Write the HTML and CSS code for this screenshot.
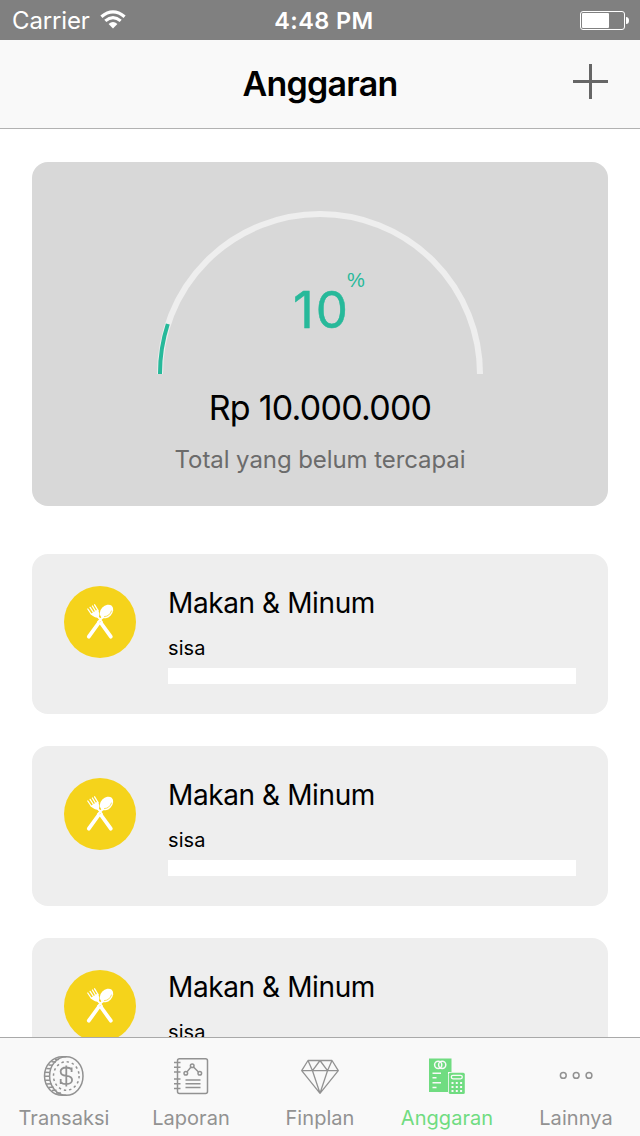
FILE: index.html
```html
<!DOCTYPE html>
<html lang="id">
<head>
<meta charset="utf-8">
<title>Anggaran</title>
<link rel="stylesheet" href="styles.css">
</head>
<body>
<svg width="0" height="0" class="defs">
  <symbol id="cutlery" viewBox="0 0 72 72">
    <circle cx="36" cy="36" r="36" fill="#f5d31b"/>
    <g stroke="#fff" stroke-linecap="round" fill="none">
      <path d="M34.300 37.500 24.800 50.700M37.300 37.500 46.800 50.700" stroke-width="3.800"/>
      <path d="M34 31 38 36M39 31 34 36" stroke-width="2"/>
      <path d="M23.800 23 27.500 28.500M26.100 21.400 29.800 27M28.400 20 32 26M30.600 18.800 34 24.500" stroke-width="1.300"/>
    </g>
    <path d="M26.500 28 34 23.200Q36.200 27.500 34.800 31.600Q30.500 32.200 26.500 28Z" fill="#fff"/>
    <ellipse cx="42.500" cy="25.500" rx="5.700" ry="7.700" transform="rotate(43 42.500 25.500)" fill="#fff"/>
    <path d="M40 30.700Q45.800 30.200 47.600 24.600" stroke="#f5d31b" stroke-width=".7" fill="none"/>
  </symbol>
</svg>
<div class="screen">
  <header class="status">
    <div class="network">
      <span class="carrier">Carrier</span>
      <svg width="26" height="20" viewBox="0 0 26 20"><g fill="none" stroke="#fff" stroke-width="3.200"><path d="M1.400 6.800Q13-3 24.600 6.800"/><path d="M5.300 10.900Q13 4.400 20.700 10.900"/></g><path d="M8.600 14Q13 10.200 17.400 14L13 18.500Z" fill="#fff"/></svg>
    </div>
    <span class="time">4:48 PM</span>
    <svg class="battery" width="50" height="20" viewBox="0 0 50 20"><rect x=".5" y="1.500" width="44" height="18" rx="2.500" fill="none" stroke="#fff"/><rect x="2" y="3" width="27" height="15" rx="1" fill="#fff"/><path d="M46 7Q49 7 49 10.500T46 14Z" fill="#fff"/></svg>
  </header>
  <nav class="navbar">
    <h1 class="title">Anggaran</h1>
    <svg class="add" width="35" height="35" viewBox="0 0 35 35"><path d="M0 17.500H35M17.500 0V35" stroke="#666" stroke-width="3"/></svg>
  </nav>
  <main class="content">
    <section class="summary">
      <div class="gauge">
        <svg class="arc" width="326" height="163" viewBox="0 0 326 163"><path d="M3 163A160 160 0 0 1 323 163" fill="none" stroke="#eee" stroke-width="6"/><path d="M3 163A160 160 0 0 1 10.800 113" fill="none" stroke="#27b99a" stroke-width="4"/></svg>
        <div class="percent"><span class="value">10</span><span class="unit">%</span></div>
      </div>
      <div class="amount">Rp 10.000.000</div>
      <div class="caption">Total yang belum tercapai</div>
    </section>
    <section class="budgets">
      <article class="budget">
        <svg width="72" height="72"><use href="#cutlery"/></svg>
        <div class="details"><h2 class="name">Makan &amp; Minum</h2><p class="left">sisa</p><div class="bar"></div></div>
      </article>
      <article class="budget">
        <svg width="72" height="72"><use href="#cutlery"/></svg>
        <div class="details"><h2 class="name">Makan &amp; Minum</h2><p class="left">sisa</p><div class="bar"></div></div>
      </article>
      <article class="budget">
        <svg width="72" height="72"><use href="#cutlery"/></svg>
        <div class="details"><h2 class="name">Makan &amp; Minum</h2><p class="left">sisa</p><div class="bar"></div></div>
      </article>
    </section>
  </main>
  <footer class="tabs">
    <div class="tab">
      <svg width="42" height="42" viewBox="0 0 42 42" fill="none" stroke="#929292" stroke-width="1.500"><ellipse cx="23.300" cy="21" rx="16.700" ry="19.300"/><path d="M23.300 1.700H19.500A18 19.300 0 0 0 19.500 40.300H23.300"/><ellipse cx="23.300" cy="21" rx="12.800" ry="14.200" stroke-dasharray="2.400 2.900"/><path d="M12 4.200 16 4.500M8.500 6.800 13 7M5.500 10 10 10.200M3.300 13.500 8 13.800M2 17.300 7 17.500M1.500 21.300H6.500M2 25.200H7M3.300 29 8.500 28.800M5.600 32.400 10.500 32M9 35.600 13.500 35.200M13 38H18"/><path d="M28.600 17V14.300Q26.500 12.500 23.300 12.500C15.500 12.500 16 20.500 23.300 20.800C31 21 31 29.200 23.300 29.200Q19.500 29.200 17.700 27M17.700 24V29M28.600 12.500V17M23.300 10.500V31.500" stroke-width="1.800"/></svg>
      <span class="label">Transaksi</span>
    </div>
    <div class="tab laporan">
      <svg width="42" height="42" viewBox="0 0 42 42" fill="none" stroke="#929292" stroke-width="1.500"><rect x="7.500" y="3.700" width="30" height="34.800" rx="2"/><path d="M4 7.500H10.500M4 12.200H10.500M4 17H10.500M4 24H10.500M4 28.800H10.500M4 33.600H10.500M15.500 25H30.500M15.500 28.800H30.500M15.500 32.500H30.500"/><circle cx="15.800" cy="18.300" r="1.800"/><circle cx="22.200" cy="10.700" r="1.800"/><circle cx="29.800" cy="18.300" r="1.800"/><path d="M17 16.900 21 12M23.500 12 28.500 17"/></svg>
      <span class="label">Laporan</span>
    </div>
    <div class="tab">
      <svg width="42" height="42" viewBox="0 0 42 42" fill="none" stroke="#929292" stroke-width="1.300" stroke-linejoin="round"><path d="M9 5.500H33L39.300 15.700 21 38.300 2.700 15.700ZM2.700 15.700H39.300M9 5.500 13.500 15.700 21 5.500 28.500 15.700 33 5.500M13.500 15.700 21 38.300 28.500 15.700"/></svg>
      <span class="label">Finplan</span>
    </div>
    <div class="tab anggaran">
      <svg width="42" height="42" viewBox="0 0 42 42"><path d="M3 3.500H25.500V17H22V37H3Z" fill="#70dc81"/><g fill="none" stroke="#f9f9f9" stroke-width="1.500"><circle cx="12.200" cy="9.800" r="3.600"/><circle cx="16.200" cy="9.800" r="3.600"/><path d="M6.500 18.200H15M6.500 22.800H10.500M6.500 27.700H15M6.500 32.400H10.500"/></g><rect x="22.800" y="17.800" width="16" height="21.200" rx="1.500" fill="#70dc81"/><g fill="none" stroke="#f9f9f9"><rect x="25.300" y="20.300" width="11" height="3.500" rx="1.700" stroke-width="1.300"/><path d="M25.500 28H36.500M25.500 32H36.500M25.500 36H36.500" stroke-width="2" stroke-dasharray="2 2.300"/></g></svg>
      <span class="label">Anggaran</span>
    </div>
    <div class="tab">
      <svg width="42" height="42" viewBox="0 0 42 42" fill="none" stroke="#929292" stroke-width="1.500"><circle cx="8.300" cy="20.400" r="2.900"/><circle cx="21.200" cy="20.400" r="2.900"/><circle cx="34" cy="20.400" r="2.900"/></svg>
      <span class="label">Lainnya</span>
    </div>
  </footer>
</div>
</body>
</html>
```
FILE: styles.css
```css
* { box-sizing: border-box; margin: 0; padding: 0; }
body { background: #fff; font-family: Inter, "Liberation Sans", sans-serif; color: #000; }
svg { display: block; flex: none; }
.defs { display: none; }
.screen { height: 1136px; width: 640px; display: flex; flex-direction: column; overflow: hidden; }
.status { height: 40px; flex: none; background: #808080; color: #fff; display: grid; grid-template-columns: 1fr auto 1fr; align-items: center; padding: 0 10px 0 12px; }
.network { display: flex; align-items: center; gap: 10px; }
.carrier { font-size: 24px; letter-spacing: -.15px; line-height: 38px; padding-top: 2px; }
.time { font-size: 23.5px; font-weight: 600; letter-spacing: .4px; line-height: 38px; padding: 2px 0 0 6px; }
.battery { justify-self: end; }
.navbar { height: 89px; flex: none; background: #f9f9f9; border-bottom: 1px solid #b2b2b2; display: grid; grid-template-columns: 1fr auto 1fr; align-items: start; padding: 0 32px; }
.title { grid-column: 2; font-size: 34px; font-weight: 600; line-height: 88px; letter-spacing: -.75px; }
.add { justify-self: end; margin-top: 24px; }
.content { flex: 1; min-height: 0; overflow: hidden; padding: 33px 32px 0; }
.summary { height: 344px; border-radius: 16px; background: #d8d8d8; display: flex; flex-direction: column; align-items: center; padding-top: 49px; }
.gauge { display: grid; height: 163px; width: 326px; }
.arc, .percent { grid-area: 1 / 1; }
.percent { display: flex; align-items: flex-start; color: #27b99a; padding: 57px 0 0 136px; }
.value { font-size: 51px; line-height: 60px; padding-top: 12px; width: 54px; letter-spacing: 2px; -webkit-text-stroke: .5px #27b99a; }
.unit { font-family: "Liberation Sans", sans-serif; font-size: 20px; line-height: 24px; }
.amount { font-size: 34px; line-height: 42px; margin-top: 13px; letter-spacing: -.75px; }
.caption { font-size: 24px; line-height: 30px; margin-top: 16px; color: #6b6b6b; letter-spacing: -.08px; }
.budgets { display: flex; flex-direction: column; gap: 32px; padding-top: 48px; }
.budget { height: 160px; border-radius: 16px; background: #eee; display: flex; gap: 32px; padding: 32px 32px 0; }
.details { flex: 1; }
.name { font-size: 28px; font-weight: 400; line-height: 34px; letter-spacing: -.4px; }
.left { font-size: 20px; line-height: 24px; margin: 16px 0 8px; letter-spacing: .1px; }
.bar { height: 16px; background: #fff; }
.tabs { height: 99px; flex: none; background: #f9f9f9; border-top: 1px solid #a9a9a9; display: grid; grid-template-columns: repeat(5, 1fr); padding-top: 17px; }
.tab { display: flex; flex-direction: column; align-items: center; gap: 8px; color: #929292; }
.laporan, .anggaran { padding-right: 2px; }
.anggaran { color: #70dc81; }
.label { font-size: 20px; line-height: 26px; letter-spacing: .05px; }
```
